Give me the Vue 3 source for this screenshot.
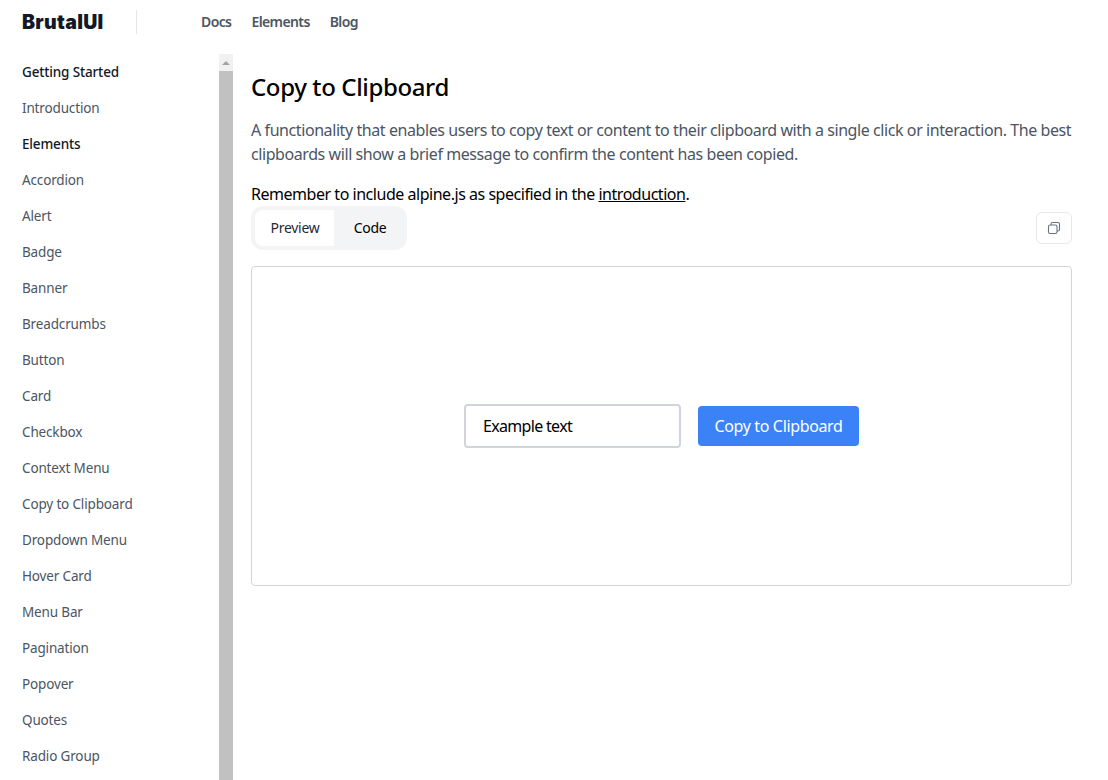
<script setup>
const groups = [
  { title: 'Getting Started', items: ['Introduction'] },
  { title: 'Elements', items: ['Accordion','Alert','Badge','Banner','Breadcrumbs','Button','Card','Checkbox','Context Menu','Copy to Clipboard','Dropdown Menu','Hover Card','Menu Bar','Pagination','Popover','Quotes','Radio Group'] }
]
</script>

<template>
  <div class="page">
    <header class="top">
      <div class="logo">BrutalUI</div>
      <nav class="nav">
        <a>Docs</a><a>Elements</a><a>Blog</a>
      </nav>
    </header>
    <div class="body">
      <aside class="side">
        <div class="side-list">
          <template v-for="g in groups" :key="g.title">
            <div class="side-title">{{ g.title }}</div>
            <div v-for="i in g.items" :key="i" class="side-item">{{ i }}</div>
          </template>
        </div>
        <div class="scrollbar">
          <div class="arrow"></div>
          <div class="thumb"></div>
        </div>
      </aside>
      <main class="main">
        <h1>Copy to Clipboard</h1>
        <p class="lead">A functionality that enables users to copy text or content to their clipboard with a single click or interaction. The best clipboards will show a brief message to confirm the content has been copied.</p>
        <p class="note">Remember to include alpine.js as specified in the <a>introduction</a>.</p>
        <div class="bar">
          <div class="tabs">
            <div class="tab active">Preview</div>
            <div class="tab">Code</div>
          </div>
          <button class="copy-icon" aria-label="Copy">
            <svg width="14" height="14" viewBox="0 0 14 14" fill="none" stroke="#6b7280" stroke-width="1.1">
              <rect x="1.5" y="4" width="8.5" height="8.5" rx="1.6" />
              <path d="M4 4V3.1A1.6 1.6 0 0 1 5.6 1.5h5.3A1.6 1.6 0 0 1 12.5 3.1v5.3A1.6 1.6 0 0 1 10.9 10H10" />
            </svg>
          </button>
        </div>
        <section class="preview">
          <div class="input">Example text</div>
          <button class="cta">Copy to Clipboard</button>
        </section>
      </main>
    </div>
  </div>
</template>

<style>
html, body { margin: 0; overflow: hidden; background: #fff; }
</style>

<style scoped>
.page {
  width: 1108px;
  height: 780px;
  overflow: hidden;
  font-family: "Noto Sans", "Open Sans", sans-serif;
  color: #000;
  background: #fff;
}
.top {
  display: flex;
  align-items: center;
  height: 54px;
  padding: 0 0 10px 22px;
  box-sizing: border-box;
}
.logo {
  width: 114px;
  height: 24px;
  line-height: 24px;
  border-right: 1px solid #e5e7eb;
  font-family: "Inter", sans-serif;
  font-size: 19.5px;
  font-weight: 900;
  letter-spacing: 0.3px;
  color: #111827;
}
.nav { display: flex; gap: 20px; margin-left: 64px; margin-bottom: 1px; }
.nav a {
  font-size: 14px;
  font-weight: 600;
  color: #4b5563;
  letter-spacing: -0.6px;
}
.body { display: flex; height: 726px; }
.side {
  width: 233px;
  flex: none;
  display: flex;
  overflow: hidden;
}
.side-list { width: 219px; padding: 0 0 0 22px; box-sizing: border-box; }
.side-title, .side-item {
  height: 36px;
  line-height: 36px;
  font-size: 13.5px;
  letter-spacing: -0.15px;
  white-space: nowrap;
}
.side-title { font-weight: 500; color: #111827; }
.side-item { color: #4b5563; }
.scrollbar { width: 14px; background: #f1f1f1; flex: none; }
.arrow {
  width: 0;
  height: 0;
  margin: 7px auto 6px;
  border-left: 4px solid transparent;
  border-right: 4px solid transparent;
  border-bottom: 4px solid #a3a3a3;
}
.thumb { height: 720px; background: #c1c1c1; }
.main { flex: 1; padding: 0 36px 0 18px; min-width: 0; }
h1 {
  margin: 17px 0 0;
  font-size: 24px;
  line-height: 32px;
  font-weight: 500;
  color: #000;
  letter-spacing: -0.37px;
}
.lead {
  margin: 15px 0 0;
  font-size: 16px;
  line-height: 24px;
  color: #4b5563;
  letter-spacing: -0.42px;
}
.note {
  margin: 16px 0 0;
  font-size: 16px;
  line-height: 24px;
  letter-spacing: -0.47px;
}
.note a { text-decoration: underline; }
.bar {
  display: flex;
  justify-content: space-between;
  align-items: center;
  height: 44px;
}
.tabs {
  display: flex;
  height: 44px;
  box-sizing: border-box;
  padding: 4px;
  background: #f3f4f6;
  border-radius: 12px;
}
.tab {
  width: 69px;
  box-sizing: border-box;
  padding-left: 3px;
  text-align: center;
  line-height: 36px;
  font-size: 14px;
  letter-spacing: -0.3px;
}
.tab.active { width: 79px; padding-left: 1px; background: #fff; border-radius: 8px 0 0 8px; color: #1f2937; }
.copy-icon {
  width: 36px;
  height: 32px;
  padding: 0;
  display: flex;
  align-items: center;
  justify-content: center;
  border: 1px solid #e5e7eb;
  border-radius: 6px;
  background: #fff;
}
.preview {
  margin-top: 16px;
  height: 320px;
  box-sizing: border-box;
  border: 1px solid #d1d5db;
  border-radius: 4px;
  display: flex;
  align-items: center;
  justify-content: center;
  gap: 17px;
}
.input {
  width: 217px;
  height: 44px;
  box-sizing: border-box;
  border: 2px solid #d1d5db;
  border-radius: 4px;
  padding-left: 17px;
  line-height: 40px;
  font-size: 16px;
  letter-spacing: -0.68px;
}
.cta {
  width: 161px;
  height: 40px;
  border: 0;
  border-radius: 4px;
  background: #3b82f6;
  color: #fff;
  font: inherit;
  font-size: 16px;
  letter-spacing: -0.35px;
}
</style>
